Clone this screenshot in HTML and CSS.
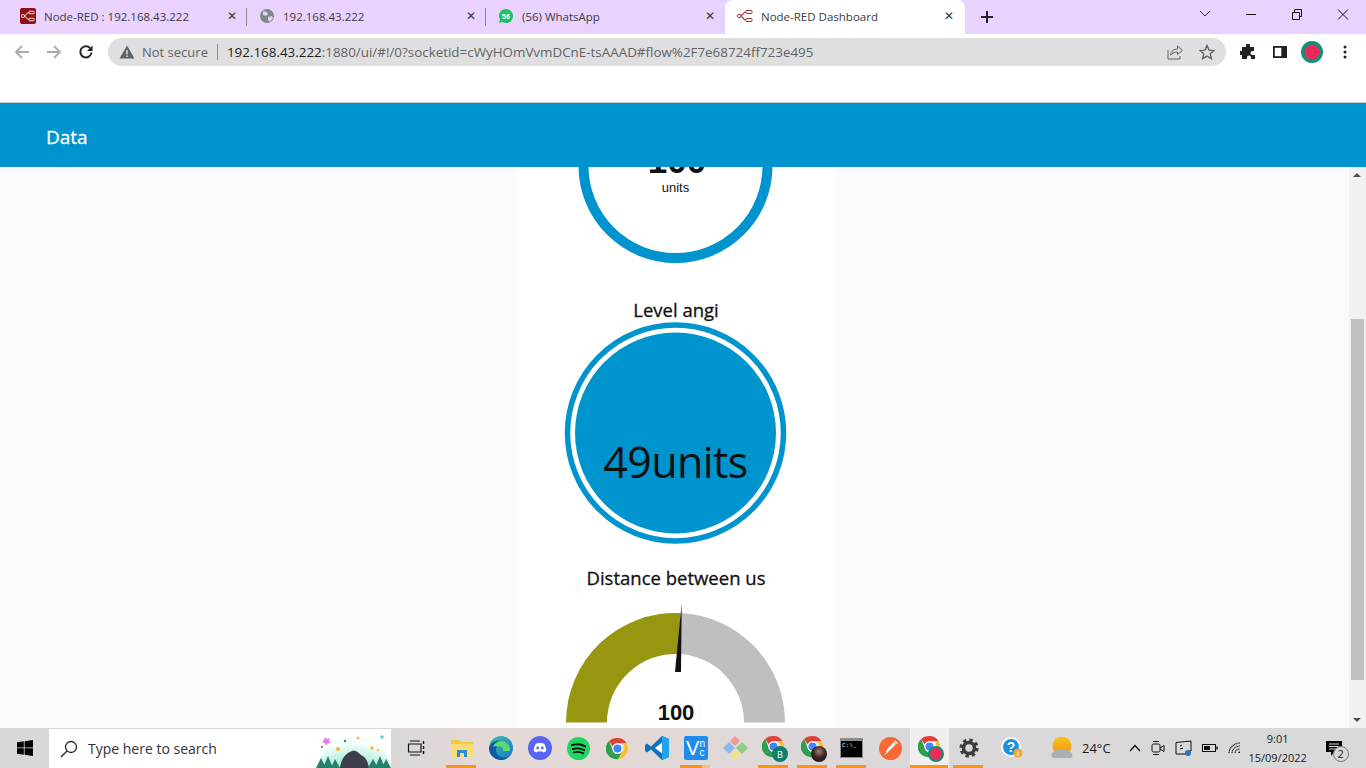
FILE: index.html
```html
<!DOCTYPE html>
<html lang="en">
<head>
  <meta charset="UTF-8">
  <title>Node-RED Dashboard</title>
  <link rel="stylesheet" href="styles.css">
</head>
<body>

  <svg class="defs" width="0" height="0">
    <symbol id="chrome" viewBox="0 0 24 24">
      <path d="M12 1a11 11 0 0 1 9.530 5.500H12a5.500 5.500 0 0 0-5 3.200L3.200 4.100A11 11 0 0 1 12 1z" fill="#db4437"/>
      <path d="M21.530 6.500A11 11 0 0 1 12.600 23l4.200-7.500a5.500 5.500 0 0 0 .2-9z" fill="#fbc02d"/>
      <path d="M3.200 4.100 7.600 15a5.500 5.500 0 0 0 9.200.5L12.600 23A11 11 0 0 1 3.200 4.100z" fill="#2e9e4f"/>
      <circle cx="12" cy="12" r="5.400" fill="#fff"/>
      <circle cx="12" cy="12" r="4.200" fill="#4285f4"/>
    </symbol>
    <symbol id="flow" viewBox="0 0 16 16">
      <path d="M3.500 8C6 8 6 4 9 4M3.500 8C6 8 6 12 9 12" fill="none" stroke="currentColor" stroke-width="1.100"/>
      <rect x=".5" y="6.500" width="3.500" height="3" rx=".8" fill="none" stroke="currentColor"/>
      <rect x="9" y="2.500" width="6" height="3" rx="1" fill="none" stroke="currentColor"/>
      <rect x="9" y="10.500" width="6" height="3" rx="1" fill="none" stroke="currentColor"/>
    </symbol>
  </svg>

  <div class="tabstrip">
    <div class="tab">
      <span class="favicon nodered"><svg width="14" height="14"><use href="#flow"/></svg></span>
      <span class="tabtitle">Node-RED : 192.168.43.222</span>
      <span class="tabclose">✕</span>
    </div>
    <div class="tab">
      <svg class="favicon" width="16" height="16" viewBox="0 0 16 16"><circle cx="8" cy="8" r="7" fill="#80868b"/><path d="M4 3l4 1 1 2-2 2-3-1zM9 9l4-1 1 2-3 4-2-2z" fill="#dfd3ee"/></svg>
      <span class="tabtitle">192.168.43.222</span>
      <span class="tabclose">✕</span>
    </div>
    <div class="tab">
      <svg class="favicon" width="16" height="16" viewBox="0 0 16 16"><path d="M8 1a7 7 0 1 1-3.400 13.100L1 15l1-3.400A7 7 0 0 1 8 1z" fill="#22c15e"/><text x="8" y="10.600" class="wa-count" text-anchor="middle">56</text></svg>
      <span class="tabtitle">(56) WhatsApp</span>
      <span class="tabclose">✕</span>
    </div>
    <div class="tab active">
      <svg class="favicon flowred" width="16" height="16"><use href="#flow"/></svg>
      <span class="tabtitle">Node-RED Dashboard</span>
      <span class="tabclose">✕</span>
    </div>
    <svg class="newtab" width="14" height="14" viewBox="0 0 14 14"><path d="M7 1v12M1 7h12" stroke="#202124" stroke-width="2"/></svg>
    <div class="wincontrols">
      <svg width="46" height="30" viewBox="0 0 46 30"><path d="M18 11l5 5 5-5" fill="none" stroke="#333"/></svg>
      <svg width="46" height="30" viewBox="0 0 46 30"><path d="M18 14.500h10" stroke="#111"/></svg>
      <svg width="46" height="30" viewBox="0 0 46 30"><path d="M18.500 12.500h7v7h-7zM20.500 12v-2.500h7v7h-2" fill="none" stroke="#111"/></svg>
      <svg width="46" height="30" viewBox="0 0 46 30"><path d="M18 9.500l10 10M28 9.500l-10 10" stroke="#111"/></svg>
    </div>
  </div>

  <div class="toolbar">
    <svg class="navbtn" width="16" height="16" viewBox="0 0 16 16"><path d="M15 8H2M8 2 2 8l6 6" fill="none" stroke="#a9abad" stroke-width="1.800"/></svg>
    <svg class="navbtn" width="16" height="16" viewBox="0 0 16 16"><path d="M1 8h13M8 2l6 6-6 6" fill="none" stroke="#a9abad" stroke-width="1.800"/></svg>
    <svg class="navbtn reload" width="16" height="16" viewBox="0 0 16 16"><path d="M13.500 8.500A5.600 5.600 0 1 1 12 4" fill="none" stroke="#202124" stroke-width="1.900"/><path d="M14.500 1.500v5.500h-5.500z" fill="#202124"/></svg>
    <div class="omnibox">
      <svg width="16" height="14" viewBox="0 0 16 14"><path d="M8 .5 15.500 13.500H.5z" fill="#5f6368"/><path d="M8 5v4.500M8 10.500v1.500" stroke="#dfdfdf" stroke-width="1.400"/></svg>
      <span class="notsecure">Not secure</span>
      <span class="urlbar-sep"></span>
      <span class="url"><b>192.168.43.222</b>:1880/ui/#!/0?socketid=cWyHOmVvmDCnE-tsAAAD#flow%2F7e68724ff723e495</span>
      <svg class="share" width="16" height="16" viewBox="0 0 16 16"><path d="M1 6v9h12v-3M3.500 11C4 7 7 5 10.500 5V2L15.500 6.500 10.500 10.500V8C8 8 5.500 9 3.500 11z" fill="none" stroke="#5f6368"/></svg>
      <svg class="star" width="16" height="16" viewBox="0 0 16 16"><path d="M8 1.500l2 4.600 5 .4-3.800 3.300 1.200 4.900L8 12.100 3.600 14.700l1.200-4.900L1 6.500l5-.4z" fill="none" stroke="#5f6368" stroke-width="1.400"/></svg>
    </div>
    <svg class="toolicon" width="16" height="16" viewBox="0 0 16 16"><path d="M6 1.500a2 2 0 0 1 4 0V3h4v4h-1.500a2 2 0 0 0 0 4H15v4h-4v-1.500a2 2 0 0 0-4 0V15H2v-4H.8a2 2 0 0 1 0-4H2V3h4z" fill="#202124"/></svg>
    <svg class="toolicon" width="16" height="16" viewBox="0 0 16 16"><rect x="1" y="2" width="14" height="12" fill="#202124"/><rect x="2.800" y="3.800" width="6.500" height="8.400" fill="#fff"/></svg>
    <svg class="toolicon avatar" width="22" height="22" viewBox="0 0 22 22"><circle cx="11" cy="11" r="11" fill="#0f8f7c"/><circle cx="11" cy="11" r="7.500" fill="#ee2a55"/><circle cx="11" cy="11" r="4" fill="none" stroke="#8c1a3c" stroke-width=".8" stroke-dasharray="1 2"/></svg>
    <svg class="toolicon dots" width="4" height="14" viewBox="0 0 4 14"><circle cx="2" cy="2" r="1.500" fill="#202124"/><circle cx="2" cy="7" r="1.500" fill="#202124"/><circle cx="2" cy="12" r="1.500" fill="#202124"/></svg>
  </div>

  <div class="pagehead">
    <span class="pagetitle">Data</span>
  </div>

  <div class="content">
    <div class="dashboard">
      <div class="card">
        <svg class="gauge" width="320" height="110" viewBox="0 0 320 110">
          <circle cx="159.500" cy="-1" r="92" fill="none" stroke="#0094ce" stroke-width="10"/>
          <text x="161" y="5.500" text-anchor="middle" class="bignum">100</text>
          <text x="159.500" y="25" text-anchor="middle" class="units">units</text>
        </svg>

        <div class="widgettitle first">Level angi</div>
        <svg class="gauge" width="320" height="224" viewBox="0 0 320 224">
          <circle cx="159.500" cy="112" r="108" fill="none" stroke="#0094ce" stroke-width="5.500"/>
          <circle cx="159.500" cy="112" r="100.500" fill="#0094ce"/>
          <text x="159.500" y="157" text-anchor="middle" class="levelnum">49units</text>
        </svg>

        <div class="widgettitle">Distance between us</div>
        <svg class="gauge" width="320" height="137" viewBox="0 0 320 137">
          <path d="M50 131.500A109.500 109.500 0 0 1 164.500 22.100L162.600 63A68.500 68.500 0 0 0 91 131.500z" fill="#96970f"/>
          <path d="M269 131.500A109.500 109.500 0 0 0 164.500 22.100L162.600 63A68.500 68.500 0 0 1 228 131.500z" fill="#bfbfbf"/>
          <path d="M165.700 12 159 81h6z" fill="#111"/>
          <text x="160" y="129" text-anchor="middle" class="gaugenum">100</text>
        </svg>
      </div>
    </div>
    <div class="scrollbar">
      <span class="arrow up"></span>
      <div class="track"><div class="thumb"></div></div>
      <span class="arrow down"></span>
    </div>
  </div>

  <div class="taskbar">
    <svg class="winlogo" width="16" height="16" viewBox="0 0 16 16"><path d="M0 2.300 6.800 1.300V7.500H0zM7.600 1.200 16 0V7.500H7.600zM0 8.300H6.800V14.700L0 13.700zM7.600 8.300H16V16L7.600 14.800z" fill="#000"/></svg>

    <div class="searchbox">
      <svg width="18" height="18" viewBox="0 0 18 18"><circle cx="11" cy="7" r="5.500" fill="none" stroke="#222" stroke-width="1.300"/><path d="M7 11 1 17" stroke="#222" stroke-width="1.300"/></svg>
      <span class="searchtext">Type here to search</span>
      <svg class="searchart" width="75" height="36" viewBox="0 0 75 36">
        <defs><radialGradient id="glow" cx=".5" cy="1" r=".9"><stop offset=".4" stop-color="#a9aef5"/><stop offset=".7" stop-color="#aeeedd"/><stop offset="1" stop-color="#f4fffb"/></radialGradient></defs>
        <ellipse cx="38" cy="36" rx="36" ry="31" fill="url(#glow)"/>
        <path d="M24 36c1-9 6-15 12-17 5-1 6 2 9 4 5 2 7 7 8 13z" fill="#3d3f4c"/>
        <path d="M0 36l5-10 5 10zM7 36l5-12 5 12zM15 36l4-9 5 9zM52 36l5-9 5 9zM59 36l5-12 5 12zM66 36l4-9 5 9z" fill="#25806b"/>
        <path d="M9 5l2 2 3-1-1 3 2 2-3 0-2 3-1-3-3-1 2-2z" fill="#e877ea"/>
        <circle cx="22" cy="17" r="2" fill="#fbb034"/><circle cx="29" cy="9" r="1.200" fill="#3c6fc4"/><circle cx="42" cy="6" r="1.500" fill="#f5b942"/><circle cx="66" cy="5" r="1.800" fill="#5fd0e0"/><circle cx="56" cy="16" r="1.800" fill="#f5b942"/><circle cx="6" cy="15" r="1.100" fill="#3c6fc4"/><circle cx="62" cy="18" r="1.200" fill="#f5b942"/>
      </svg>
    </div>

    <svg class="taskview" width="18" height="16" viewBox="0 0 18 16"><path d="M3 1h10M3 15h10M1.500 4h12.500v8H1.500z" fill="none" stroke="#111" stroke-width="1.200"/><path d="M16.500 1v3M16.500 6v3M16.500 11v3" stroke="#111" stroke-width="1.500"/></svg>

    <div class="apps">
      <div class="app open">
        <svg width="22" height="20" viewBox="0 0 22 20"><path d="M0 2h8l2 2h12v15H0z" fill="#f6c945"/><path d="M0 6h22v13H0z" fill="#fcdc72"/><path d="M6 12h10v7h-3v-4H9v4H6z" fill="#2a8bd8"/></svg>
      </div>
      <div class="app">
        <svg width="24" height="24" viewBox="0 0 24 24"><defs><linearGradient id="edgeg" x1="0" y1="0" x2="1" y2="1"><stop offset="0" stop-color="#37c6a5"/><stop offset="1" stop-color="#1b6fd0"/></linearGradient></defs><circle cx="12" cy="12" r="12" fill="url(#edgeg)"/><path d="M0 12C2 5 9 3 15 6c5 3 7 7 6 9h-7c2-3-1-6-4-5-4 1-4 7 0 10 3 2 7 2 10 0-3 4-8 5-12 3C3 21 0 17 0 12z" fill="#0c59a4"/><path d="M9 11c3-2 6 1 5 4h7c1-5-4-10-9-10-4 0-7 3-8 6 1-1 3-1 5 0z" fill="#5fd86f"/></svg>
      </div>
      <div class="app">
        <svg width="24" height="24" viewBox="0 0 24 24"><circle cx="12" cy="12" r="12" fill="#5865f2"/><path d="M8 7.500c2.500-.7 5.500-.7 8 0 1.500 2.500 2.300 5 2.300 7.500-1 .9-2.200 1.400-3.300 1.600l-.8-1.300c-1.500.4-2.900.4-4.400 0l-.8 1.300c-1.100-.2-2.300-.7-3.300-1.600 0-2.500.8-5 2.300-7.500z" fill="#fff"/><circle cx="9.700" cy="12" r="1.400" fill="#5865f2"/><circle cx="14.300" cy="12" r="1.400" fill="#5865f2"/></svg>
      </div>
      <div class="app">
        <svg width="23" height="23" viewBox="0 0 24 24"><circle cx="12" cy="12" r="12" fill="#1ed760"/><path d="M5 8.500c4.500-1.300 10-1 14 1.300M6 12.500c4-1 8.500-.7 12 1.200M7 16c3.300-.8 7-.6 10 1" fill="none" stroke="#111" stroke-width="2" stroke-linecap="round"/></svg>
      </div>
      <div class="app"><svg width="23" height="23"><use href="#chrome"/></svg></div>
      <div class="app">
        <svg width="24" height="24" viewBox="0 0 24 24"><path d="M17 0l7 3v18l-7 3-11-10.500-4 3L0 15v-6l2-1.500 4 3z" fill="#0f70b8"/><path d="M17 0l7 3v18l-7 3z" fill="#22a5ee"/><path d="M17 6.500v11L10 12z" fill="#fff"/></svg>
      </div>
      <div class="app open half">
        <div class="vnc"><span class="vnc-v">V</span><span class="vnc-c">n<br>c</span></div>
      </div>
      <div class="app">
        <svg width="26" height="26" viewBox="0 0 26 26"><path d="M1 13l6-6 6 6-6 6z" fill="#8cb8f0"/><path d="M8 6l5-5 5 5-5 5z" fill="#f09a9a"/><path d="M14 13l6-6 6 6-6 6z" fill="#8ed081"/><path d="M8 20l5-5 5 5-5 5z" fill="#f6e27f"/></svg>
      </div>
      <div class="app open">
        <div class="badged">
          <svg width="23" height="23"><use href="#chrome"/></svg>
          <span class="badge teal">B</span>
        </div>
      </div>
      <div class="app open">
        <div class="badged">
          <svg width="23" height="23"><use href="#chrome"/></svg>
          <span class="badge photo"></span>
        </div>
      </div>
      <div class="app open">
        <div class="cmd"><span class="cmdbar"></span><span class="cmdtext">C:\_</span></div>
      </div>
      <div class="app">
        <svg width="23" height="23" viewBox="0 0 24 24"><circle cx="12" cy="12" r="12" fill="#f76935"/><path d="M6 19l3-7 6-6c1-1 3 1 2 2l-6 6z" fill="#fff"/><path d="M16 4l3 3" stroke="#fff" stroke-width="1.500"/></svg>
      </div>
      <div class="app open active">
        <div class="badged">
          <svg width="23" height="23"><use href="#chrome"/></svg>
          <span class="badge melon"></span>
        </div>
      </div>
      <div class="app open">
        <svg width="20" height="20" viewBox="0 0 20 20"><circle cx="10" cy="10" r="5.500" fill="none" stroke="#3c3c3c" stroke-width="3.500"/><circle cx="10" cy="10" r="8" fill="none" stroke="#3c3c3c" stroke-width="3.200" stroke-dasharray="3.300 3"/></svg>
      </div>
    </div>

    <div class="helpicon">
      <svg width="22" height="22" viewBox="0 0 22 22"><circle cx="10" cy="10" r="10" fill="#fff"/><circle cx="10" cy="10" r="8" fill="#1b8fe0"/><text x="10" y="15" text-anchor="middle" class="helpmark">?</text><circle cx="17" cy="16" r="4.500" fill="#f5a623"/><path d="M17 14v4.500" stroke="#fff" stroke-width="1.300"/></svg>
    </div>

    <div class="weather">
      <svg width="22" height="22" viewBox="0 0 22 22"><defs><linearGradient id="sun" x1="0" y1="0" x2="0" y2="1"><stop offset="0" stop-color="#fcc419"/><stop offset="1" stop-color="#f2920c"/></linearGradient></defs><circle cx="11" cy="9" r="9.500" fill="url(#sun)"/><path d="M3 21c-3.500 0-3.500-6 0-6 1-3 5-4 7.500-2 3-2 7-1 8 2 3.500 0 4 6 .5 6z" fill="#a9afb6"/></svg>
      <span class="temp">24°C</span>
    </div>

    <div class="tray">
      <svg class="trayicon" width="12" height="8" viewBox="0 0 12 8"><path d="M1 7l5-5.500L11 7" fill="none" stroke="#111" stroke-width="1.300"/></svg>
      <svg class="trayicon" width="14" height="16" viewBox="0 0 14 16"><rect x="1" y="4" width="8" height="8" rx="1.500" fill="none" stroke="#111"/><path d="M9 8l4-2.500v6L9 9M2 1.500h6M2 14.500h6" fill="none" stroke="#111"/></svg>
      <svg class="trayicon" width="17" height="16" viewBox="0 0 17 16"><path d="M1 2.500 16 1v10l-5 .5v2.500L1 14z" fill="none" stroke="#111"/><path d="M5 6l2-1M5 9l3-1" stroke="#111"/><circle cx="13" cy="13" r="3" fill="#2f73c0"/></svg>
      <svg class="trayicon" width="16" height="8" viewBox="0 0 16 8"><rect x=".5" y=".5" width="13" height="7" fill="none" stroke="#111"/><rect x="2" y="2" width="6" height="4" fill="#111"/><path d="M15 2.500v3" stroke="#111" stroke-width="1.500"/></svg>
      <svg class="trayicon wifi" width="13" height="12" viewBox="0 0 13 12"><path d="M1 11C1 6 6 1 12 1M4 11c0-3 3-7 8-7M7 11c0-2 2-4 5-4" fill="none" stroke="#111" stroke-width="1.100" stroke-dasharray="1.200 .5"/><path d="M12 11h-2l2-2z" fill="#111"/></svg>
    </div>

    <div class="clock">
      <span>9:01</span>
      <span>15/09/2022</span>
    </div>

    <div class="notify">
      <svg width="16" height="15" viewBox="0 0 16 15"><path d="M0 0h16v11H8l-3 4v-4H0z" fill="#000"/><path d="M3 3h10M3 5.500h10M3 8h7" stroke="#ddd"/></svg>
      <span class="notifycount">2</span>
    </div>
  </div>

</body>
</html>
```

FILE: styles.css
```css
* {
 box-sizing: border-box;
}
html, body {
 height: 100%;
}
body {
 margin: 0;
 width: 1366px;
 height: 768px;
 overflow: hidden;
 display: flex;
 flex-direction: column;
 background-color: #fff;
 font-family: "Open Sans", sans-serif;
 color: #202124;
}
.defs {
 display: block;
 height: 0;
}

/* tabs */
.tabstrip {
 height: 34px;
 display: flex;
 align-items: stretch;
 padding-left: 8px;
 background-color: #e9d3fe;
 flex-shrink: 0;
}
.tab {
 width: 239px;
 display: flex;
 align-items: center;
 padding: 0 7px 2px 12px;
 position: relative;
 font-size: 11.500px;
}
.tab::after {
 content: "";
 position: absolute;
 right: 0;
 top: 8px;
 height: 18px;
 width: 1px;
 background-color: #8a8a92;
}
.tab:nth-child(3)::after, .tab.active::after {
 display: none;
}
.tab.active {
 width: 240px;
 padding-right: 8px;
 background-color: #fff;
 border-radius: 8px 8px 0 0;
}
.favicon {
 width: 16px;
 height: 16px;
 flex-shrink: 0;
 margin-right: 8px;
}
.nodered {
 background-color: #8f0f12;
 color: #fff;
 border-radius: 2px;
 display: flex;
 align-items: center;
 justify-content: center;
}
.flowred {
 color: #a52a2a;
}
.wa-count {
 font: bold 7px "Liberation Sans", sans-serif;
 fill: #fff;
}
.tabtitle {
 flex: 1;
 white-space: nowrap;
 color: #3c3a44;
}
.tabclose {
 width: 16px;
 font-size: 12px;
 font-weight: 700;
 text-align: center;
 color: #333;
 font-family: "DejaVu Sans", sans-serif;
}
.newtab {
 margin: 10px 0 0 15px;
}
.wincontrols {
 margin-left: auto;
 display: flex;
 align-items: flex-start;
}

/* address bar */
.toolbar {
 height: 69px;
 padding: 4px 0 0 14px;
 display: flex;
 align-items: flex-start;
 border-bottom: 1px solid #ccc;
 flex-shrink: 0;
}
.navbtn {
 margin: 6px 16px 0 0;
}
.navbtn.reload {
 margin-right: 14px;
}
.omnibox {
 width: 1118px;
 height: 28px;
 padding: 0 10px 0 11px;
 background-color: #dfdfdf;
 border-radius: 14px;
 display: flex;
 align-items: center;
 font-size: 13px;
 color: #5f6368;
 white-space: nowrap;
}
.notsecure {
 margin-left: 7px;
}
.urlbar-sep {
 width: 1px;
 height: 16px;
 background-color: #8a8a8a;
 margin: 0 9px 0 9px;
}
.url {
 font-size: 13.400px;
}
.url b {
 font-weight: 400;
 color: #202124;
}
.share {
 margin-left: auto;
}
.star {
 margin-left: 16px;
 margin-right: 1px;
}
.toolicon {
 margin-top: 6px;
 margin-left: 16px;
}
.omnibox + .toolicon {
 margin-left: 14px;
}
.avatar {
 margin-top: 3px;
 margin-left: 13px;
}
.dots {
 margin-top: 7px;
 margin-left: 20px;
}

/* dashboard header */
.pagehead {
 height: 64px;
 padding: 3px 0 0 46px;
 background-color: #0094ce;
 display: flex;
 align-items: center;
 flex-shrink: 0;
}
.pagetitle {
 color: #fff;
 font-size: 19px;
 -webkit-text-stroke: .3px #fff;
}

/* dashboard */
.content {
 flex: 1;
 min-height: 0;
 display: flex;
 background-color: #fafafa;
}
.dashboard {
 flex: 1;
 padding-left: 516px;
 overflow: hidden;
}
.card {
 width: 320px;
 height: 100%;
 background-color: #fff;
 display: flex;
 flex-direction: column;
 overflow: hidden;
}
.gauge {
 display: block;
 flex-shrink: 0;
}
.widgettitle {
 height: 25px;
 margin-top: 21px;
 line-height: 24px;
 text-align: center;
 font-size: 18.500px;
 color: #111;
 -webkit-text-stroke: .3px #111;
 flex-shrink: 0;
}
.widgettitle.first {
 height: 23px;
 margin-top: 21px;
}
.bignum {
 font: bold 35px "Liberation Sans", sans-serif;
 fill: #111;
}
.units {
 font: 13px "Liberation Sans", sans-serif;
 fill: #111;
}
.levelnum {
 font: 43px "Open Sans", sans-serif;
 letter-spacing: -.6px;
 fill: #111;
}
.gaugenum {
 font: bold 22px "Liberation Sans", sans-serif;
 fill: #111;
}
.scrollbar {
 width: 17px;
 background-color: #f1f1f1;
 display: flex;
 flex-direction: column;
 align-items: center;
 flex-shrink: 0;
}
.arrow {
 height: 17px;
 width: 17px;
 flex-shrink: 0;
 position: relative;
}
.arrow::after {
 content: "";
 position: absolute;
 left: 4px;
 border-left: 4px solid transparent;
 border-right: 4px solid transparent;
}
.arrow.up::after {
 top: 6px;
 border-bottom: 4px solid #505050;
}
.arrow.down::after {
 top: 7px;
 border-top: 4px solid #505050;
}
.track {
 flex: 1;
 width: 100%;
 padding: 135px 2px 0;
}
.thumb {
 height: 361px;
 background-color: #c1c1c1;
}

/* windows taskbar */
.taskbar {
 height: 40px;
 display: flex;
 align-items: center;
 flex-shrink: 0;
 background: linear-gradient(90deg, #d8d8d8 0, #d9d7d6 390px, #e4d9d6 480px, #e2d9d7 640px, #dbd8da 900px, #d9d9d9 1366px);
 font-family: "Open Sans", sans-serif;
 color: #1a1a1a;
}
.winlogo {
 margin-left: 17px;
 flex-shrink: 0;
}
.searchbox {
 width: 342px;
 height: 39px;
 margin: 1px 0 0 16px;
 padding-left: 11px;
 background-color: #fff;
 display: flex;
 align-items: center;
 position: relative;
 flex-shrink: 0;
}
.searchtext {
 margin-left: 10px;
 font-size: 14px;
 color: #333;
}
.searchart {
 position: absolute;
 right: 0;
 bottom: 0;
}
.taskview {
 margin-left: 16px;
 flex-shrink: 0;
}
.apps {
 display: flex;
 margin-left: 17px;
 height: 40px;
}
.app {
 width: 39px;
 height: 40px;
 display: flex;
 align-items: center;
 justify-content: center;
 position: relative;
}
.app.open::after {
 content: "";
 position: absolute;
 left: 4px;
 right: 5px;
 bottom: 0;
 height: 3px;
 background-color: #f7941d;
}
.app.half::after {
 background: linear-gradient(90deg, #f7941d 22px, #f3bd82 22px);
}
.app.active {
 background-color: #f0eeee;
}
.app.active::after {
 left: 0;
 right: 1px;
}
.vnc {
 width: 24px;
 height: 24px;
 border-radius: 2px;
 background-color: #1f8ceb;
 color: #fff;
 display: flex;
 align-items: center;
 justify-content: center;
 font-family: "Liberation Sans", sans-serif;
}
.vnc-v {
 font-size: 20px;
}
.vnc-c {
 font-size: 10px;
 line-height: 9px;
}
.badged {
 width: 25px;
 height: 26px;
 position: relative;
 margin-left: 2px;
}
.badge {
 position: absolute;
 right: -1px;
 bottom: -1px;
 width: 16px;
 height: 16px;
 border-radius: 50%;
 display: flex;
 align-items: center;
 justify-content: center;
 color: #fff;
 font-size: 9px;
}
.badge.teal {
 background-color: #0e7f6c;
}
.badge.photo {
 background: radial-gradient(circle at 50% 35%, #a87f78 0, #3a2524 45%, #111 100%);
}
.badge.melon {
 background-color: #ef2b58;
 border: 2px solid #0f8f7c;
}
.cmd {
 width: 23px;
 height: 20px;
 background-color: #000;
 border: 1px solid #8c8c8c;
 color: #eee;
 font: 6px "Liberation Mono", monospace;
 display: flex;
 flex-direction: column;
}
.cmdbar {
 height: 2px;
 background-color: #8c8c8c;
 flex-shrink: 0;
}
.cmdtext {
 padding: 1px 0 0 1px;
}
.helpicon {
 margin-left: 13px;
 flex-shrink: 0;
 display: flex;
}
.helpmark {
 font: bold 14px "Liberation Sans", sans-serif;
 fill: #fff;
}
.weather {
 margin-left: 28px;
 display: flex;
 align-items: center;
 flex-shrink: 0;
}
.temp {
 margin-left: 9px;
 font-size: 13px;
}
.tray {
 display: flex;
 align-items: center;
 margin-left: 18px;
 flex-shrink: 0;
}
.trayicon {
 margin-right: 10px;
}
.trayicon.wifi {
 margin-right: 8px;
}
.clock {
 width: 72px;
 margin-left: -7px;
 display: flex;
 flex-direction: column;
 align-items: center;
 font-size: 11px;
 line-height: 19px;
 flex-shrink: 0;
}
.notify {
 margin-left: 12px;
 position: relative;
 display: flex;
 flex-shrink: 0;
}
.notifycount {
 position: absolute;
 left: 7px;
 top: 5px;
 width: 16px;
 height: 16px;
 border-radius: 50%;
 border: 1px solid #777;
 background-color: #d9d9d9;
 font-size: 11px;
 line-height: 14px;
 text-align: center;
}
```
